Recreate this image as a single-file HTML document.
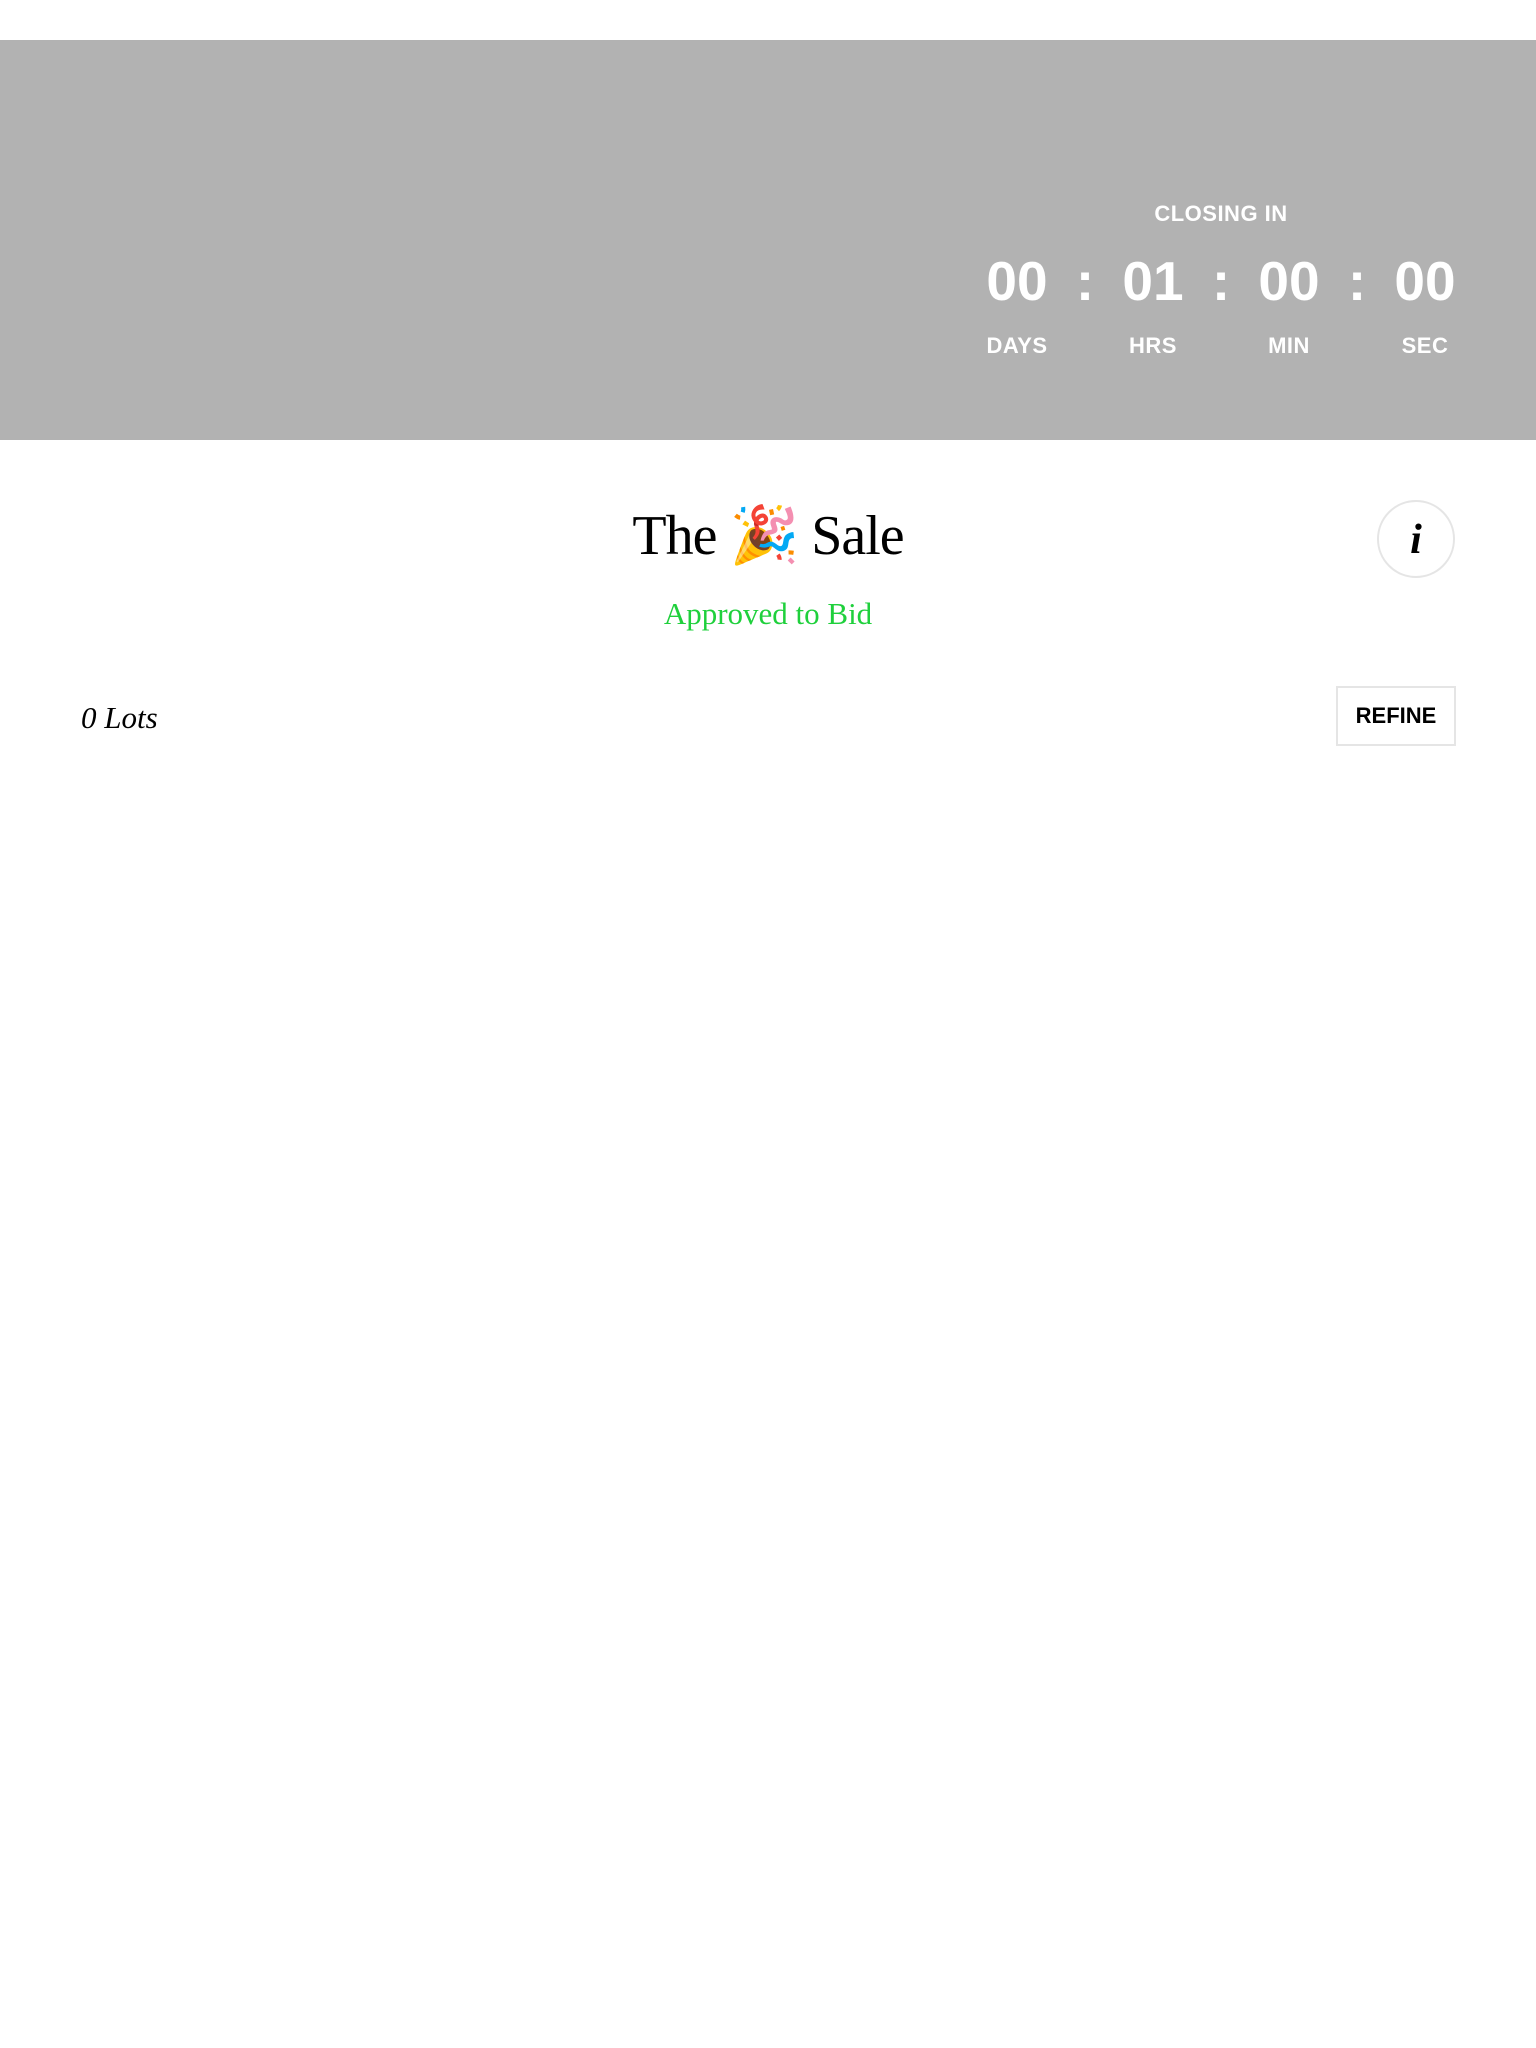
<!DOCTYPE html>
<html><head><meta charset="utf-8"><style>
body{margin:0;width:1536px;height:2048px;background:#fff;position:relative;overflow:hidden;font-family:"Liberation Sans",sans-serif}
.band{position:absolute;left:0;top:40px;width:1536px;height:400px;background:#b2b2b2}
.w{position:absolute;color:#fff;text-align:center;transform:translate(-50%,-50%);white-space:nowrap}
.lab{font-size:22px;font-weight:bold;letter-spacing:0.5px}
.num{font-size:55px;font-weight:bold}
.serif{font-family:"Liberation Serif",serif}
</style></head><body>
<div class="band"></div>
<div class="w lab" style="left:1221px;top:214px">CLOSING IN</div>
<div class="w num" style="left:1017px;top:281px">00</div>
<div class="w num" style="left:1085px;top:281px">:</div>
<div class="w num" style="left:1153px;top:281px">01</div>
<div class="w num" style="left:1221px;top:281px">:</div>
<div class="w num" style="left:1289px;top:281px">00</div>
<div class="w num" style="left:1357px;top:281px">:</div>
<div class="w num" style="left:1425px;top:281px">00</div>
<div class="w lab" style="left:1017px;top:346px">DAYS</div>
<div class="w lab" style="left:1153px;top:346px">HRS</div>
<div class="w lab" style="left:1289px;top:346px">MIN</div>
<div class="w lab" style="left:1425px;top:346px">SEC</div>
<div class="w serif" style="left:768px;top:535px;color:#000;font-size:56px;letter-spacing:-1px">The 🎉 Sale</div>
<div class="w serif" style="left:768px;top:614px;color:#1fd03c;font-size:31px">Approved to Bid</div>
<div style="position:absolute;left:1377px;top:500px;width:78px;height:78px;border:2px solid #e5e5e5;border-radius:50%;box-sizing:border-box;text-align:center;line-height:76px;font-family:'Liberation Serif',serif;font-style:italic;font-weight:bold;font-size:42px;color:#000">i</div>
<div class="serif" style="position:absolute;left:81px;top:700px;font-style:italic;font-size:31px;color:#000">0 Lots</div>
<div style="position:absolute;left:1336px;top:686px;width:120px;height:60px;border:2px solid #e5e5e5;box-sizing:border-box;text-align:center;line-height:56px;font-weight:bold;font-size:22px;color:#000">REFINE</div>
</body></html>
